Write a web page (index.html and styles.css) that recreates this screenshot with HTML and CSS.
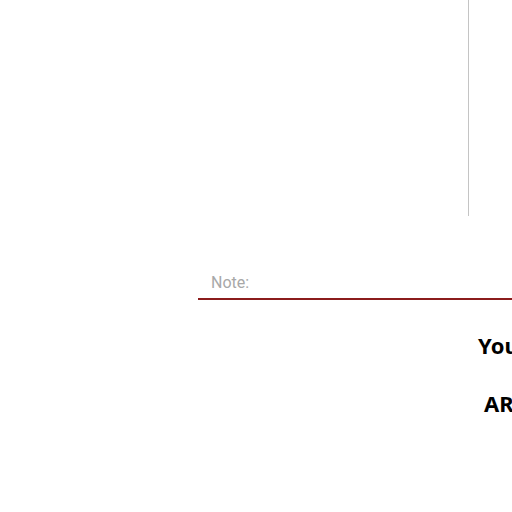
FILE: index.html
```html
<!DOCTYPE html>
<html>
<head>
<meta charset="utf-8">
<link rel="stylesheet" href="styles.css">
</head>
<body>
<div class="page">
  <div class="top">
    <div class="divider"></div>
  </div>
  <div class="note-field">
    <span class="placeholder">Note:</span>
  </div>
  <div class="heading heading-you">Your</div>
  <div class="heading heading-ar">ARE YOU</div>
</div>
</body>
</html>
```
FILE: styles.css
```css
html, body {
  margin: 0;
  padding: 0;
  background: #ffffff;
}
body {
  width: 512px;
  height: 512px;
  overflow: hidden;
}
.page {
  width: 512px;
  height: 512px;
  overflow: hidden;
}
.top {
  height: 216px;
  display: flex;
}
.divider {
  margin-left: 468px;
  width: 1px;
  background: #c4c4c4;
}
.note-field {
  margin-top: 58px;
  margin-left: 198px;
  width: 400px;
  padding-left: 13px;
  padding-bottom: 6px;
  border-bottom: 2px solid #8b1c1c;
  font-family: Roboto, "Liberation Sans", sans-serif;
  font-size: 16px;
  line-height: 18px;
  color: #a8a8a8;
  white-space: nowrap;
}
.heading {
  font-family: "Noto Sans", "Open Sans", sans-serif;
  font-weight: 700;
  font-size: 22px;
  line-height: 30px;
  color: #000000;
  white-space: nowrap;
}
.heading-you {
  margin-top: 30px;
  margin-left: 478px;
}
.heading-ar {
  margin-top: 28px;
  margin-left: 484px;
}
```
